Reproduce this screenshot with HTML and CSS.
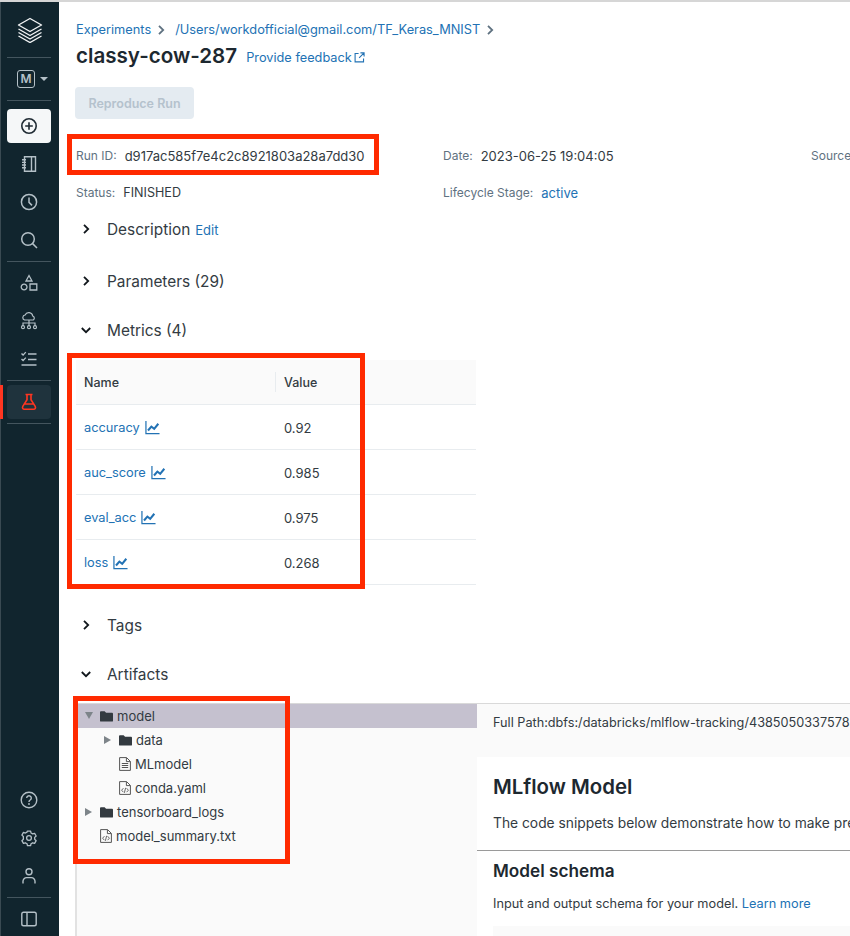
FILE: index.html
```html
<!DOCTYPE html>
<html lang="en">
<head>
<meta charset="utf-8">
<title>classy-cow-287</title>
<link rel="stylesheet" href="styles.css">
</head>
<body>
<svg class="defs" width="0" height="0" aria-hidden="true">
  <symbol id="chart" viewBox="0 0 16 16"><path d="M1 1v13.5h14.5" fill="none" stroke="currentColor" stroke-width="1.3"/><path d="M3.2 11.2l3.6-4.2 3 2.4 4.4-5.4" fill="none" stroke="currentColor" stroke-width="2.2"/></symbol>
  <symbol id="folder" viewBox="0 0 14 12"><path d="M0 2a1 1 0 0 1 1-1h4l1.5 1.5H13a1 1 0 0 1 1 1V11a1 1 0 0 1-1 1H1a1 1 0 0 1-1-1z" fill="#333a40"/></symbol>
  <symbol id="filecode" viewBox="0 0 12 14"><path d="M.6.6h7l3.8 3.8v9H.6zM7.4.8v3.8h3.8" fill="none" stroke="#555" stroke-width="1"/><path d="M4.4 7.2L2.6 9.2l1.8 2M7.6 7.2l1.8 2-1.8 2M6.6 6.8l-1.2 5" fill="none" stroke="#555" stroke-width=".9"/></symbol>
  <symbol id="filetext" viewBox="0 0 12 14"><path d="M.6.6h7l3.8 3.8v9H.6zM7.4.8v3.8h3.8" fill="none" stroke="#555" stroke-width="1"/><path d="M2.8 6.5h6.4M2.8 8.5h6.4M2.8 10.5h6.4" fill="none" stroke="#555" stroke-width="1"/></symbol>
  <symbol id="chev" viewBox="0 0 12 12"><path d="M4 1.8L8.2 6 4 10.2" fill="none" stroke="currentColor" stroke-width="1.8"/></symbol>
  <symbol id="chevd" viewBox="0 0 12 12"><path d="M1.8 4L6 8.2 10.2 4" fill="none" stroke="currentColor" stroke-width="1.8"/></symbol>
</svg>

<div class="app">
  <nav class="sidebar">
    <div class="logo">
      <svg class="ico-logo" viewBox="0 0 26 26"><path d="M13 1.5L24.5 8 13 14.5 1.5 8zM1.5 12l11.5 6.5L24.5 12M1.5 15.5L13 22l11.5-6.5M1.5 19L13 25.5 24.5 19" fill="none" stroke="#f2f4f5" stroke-width="1.4" stroke-linejoin="round"/></svg>
    </div>
    <div class="divider"></div>
    <div class="workspace">
      <span class="ws-badge">M</span><span class="ws-caret"></span>
    </div>
    <div class="divider"></div>
    <div class="group group-first">
      <a class="nav-item nav-active"><svg class="ico" viewBox="0 0 18 18"><circle cx="9" cy="9" r="7.2" fill="none" stroke="#1f2b33" stroke-width="1.6"/><path d="M9 5.2v7.6M5.2 9h7.6" stroke="#1f2b33" stroke-width="1.6"/></svg></a>
      <a class="nav-item"><svg class="ico" viewBox="0 0 18 18"><path d="M4.5 1.8h11v14.4h-11zM11.5 1.8v14.4M2 4.8h4M2 7.4h4M2 10h4M2 12.8h4" fill="none" stroke="currentColor" stroke-width="1.4"/></svg></a>
      <a class="nav-item"><svg class="ico" viewBox="0 0 18 18"><circle cx="9" cy="9" r="7.6" fill="none" stroke="currentColor" stroke-width="1.5"/><path d="M9 4.5V9.4l3 3" fill="none" stroke="currentColor" stroke-width="1.5"/></svg></a>
      <a class="nav-item"><svg class="ico" viewBox="0 0 18 18"><circle cx="8" cy="8" r="6.3" fill="none" stroke="currentColor" stroke-width="1.5"/><path d="M12.6 12.6l4.4 4.4" stroke="currentColor" stroke-width="1.5"/></svg></a>
    </div>
    <div class="divider"></div>
    <div class="group">
      <a class="nav-item"><svg class="ico" viewBox="0 0 18 18"><path d="M9 1.5L12 7H6zM1.2 13a2.9 2.9 0 1 0 5.8 0 2.9 2.9 0 1 0-5.8 0zM10 10h6.8v6H10z" fill="none" stroke="currentColor" stroke-width="1.3"/></svg></a>
      <a class="nav-item"><svg class="ico" viewBox="0 0 18 18"><path d="M4.5 8a2.6 2.6 0 0 1 .6-5 4 4 0 0 1 7.6 1 2.2 2.2 0 0 1 .5 4zM9 8v6M3 14v-3h12v3" fill="none" stroke="currentColor" stroke-width="1.2"/><circle cx="3" cy="15.2" r="1.5" fill="none" stroke="currentColor" stroke-width="1.2"/><circle cx="9" cy="15.2" r="1.5" fill="none" stroke="currentColor" stroke-width="1.2"/><circle cx="15" cy="15.2" r="1.5" fill="none" stroke="currentColor" stroke-width="1.2"/></svg></a>
      <a class="nav-item"><svg class="ico" viewBox="0 0 18 18"><path d="M1.5 3.5l1.6 1.6 2.7-3M1.5 9l1.6 1.6 2.7-3M8 4h8.5M8 9.5h8.5M1.5 15h15" fill="none" stroke="currentColor" stroke-width="1.4"/></svg></a>
    </div>
    <div class="divider"></div>
    <div class="group">
      <a class="nav-item nav-current"><svg class="ico ico-flask" viewBox="0 0 18 18"><path d="M5.5 1.5h7M7 1.5v5.2L2.8 13.4c-.8 1.4 0 2.9 1.6 2.9h9.2c1.6 0 2.4-1.5 1.6-2.9L11 6.7V1.5M4.6 11h8.8" fill="none" stroke="currentColor" stroke-width="1.6"/></svg></a>
    </div>
    <div class="divider"></div>

    <div class="group group-bottom">
      <a class="nav-item"><svg class="ico" viewBox="0 0 18 18"><circle cx="9" cy="9" r="7.8" fill="none" stroke="currentColor" stroke-width="1.4"/><path d="M6.7 7a2.3 2.3 0 1 1 3.5 2c-.8.5-1.2 1-1.2 1.9" fill="none" stroke="currentColor" stroke-width="1.4"/><circle cx="9" cy="13" r=".9" fill="currentColor"/></svg></a>
      <a class="nav-item"><svg class="ico" viewBox="0 0 18 18"><path d="M7.2 1.3h3.6l.5 2.2 1.9 1.1 2.2-.7 1.8 3.1-1.7 1.6v2.2l1.7 1.6-1.8 3.1-2.2-.7-1.9 1.1-.5 2.2H7.2l-.5-2.2-1.9-1.1-2.2.7-1.8-3.1 1.7-1.6V7.6L.8 6l1.8-3.1 2.2.7 1.9-1.1z" transform="translate(1.2 .9) scale(.87)" fill="none" stroke="currentColor" stroke-width="1.5" stroke-linejoin="round"/><circle cx="9" cy="9" r="2.4" fill="none" stroke="currentColor" stroke-width="1.3"/></svg></a>
      <a class="nav-item"><svg class="ico" viewBox="0 0 18 18"><circle cx="9" cy="4.8" r="3" fill="none" stroke="currentColor" stroke-width="1.4"/><path d="M3 16.5v-2.3a3.6 3.6 0 0 1 3.6-3.6h4.8a3.6 3.6 0 0 1 3.6 3.6v2.3" fill="none" stroke="currentColor" stroke-width="1.4"/></svg></a>
    </div>
    <div class="divider"></div>
    <div class="group group-last">
      <a class="nav-item"><svg class="ico" viewBox="0 0 18 18"><rect x="1.8" y="2.2" width="14.4" height="13.6" rx="1.8" fill="none" stroke="currentColor" stroke-width="1.4"/><path d="M7 2.2v13.6" stroke="currentColor" stroke-width="1.4"/></svg></a>
    </div>
  </nav>

  <main class="main">
    <div class="crumbs">
      <a class="link">Experiments</a>
      <svg class="crumb-chev"><use href="#chev"/></svg>
      <a class="link">/Users/workdofficial@gmail.com/TF_Keras_MNIST</a>
      <svg class="crumb-chev"><use href="#chev"/></svg>
    </div>
    <div class="title-row">
      <h1 class="title">classy-cow-287</h1>
      <a class="link feedback">Provide feedback<svg class="ext" viewBox="0 0 12 12"><path d="M5 1.6H1.2v9.2h9.2V7M7 1h4v4M11 1L5.6 6.4" fill="none" stroke="currentColor" stroke-width="1.2"/></svg></a>
    </div>
    <button class="btn" type="button" disabled>Reproduce Run</button>

    <div class="info">
      <div class="info-cell"><span class="lbl">Run ID:</span><span class="val">d917ac585f7e4c2c8921803a28a7dd30</span></div>
      <div class="info-cell"><span class="lbl">Date:</span><span class="val">2023-06-25 19:04:05</span></div>
      <div class="info-cell"><span class="lbl">Source:</span></div>
      <div class="info-cell"><span class="lbl">Status:</span><span class="val val-status">FINISHED</span></div>
      <div class="info-cell"><span class="lbl">Lifecycle Stage:</span><a class="link val-link">active</a></div>
    </div>

    <div class="section sec-desc"><svg class="sec-chev"><use href="#chev"/></svg><span class="sec-name">Description</span><a class="link sec-edit">Edit</a></div>
    <div class="section sec-params"><svg class="sec-chev"><use href="#chev"/></svg><span class="sec-name">Parameters (29)</span></div>
    <div class="section sec-metrics"><svg class="sec-chev"><use href="#chevd"/></svg><span class="sec-name">Metrics (4)</span></div>

    <table class="metrics">
      <thead><tr><th class="c-name">Name</th><th class="c-val">Value</th></tr></thead>
      <tbody>
        <tr><td><a class="link metric">accuracy<svg class="chart"><use href="#chart"/></svg></a></td><td class="num">0.92</td></tr>
        <tr><td><a class="link metric">auc_score<svg class="chart"><use href="#chart"/></svg></a></td><td class="num">0.985</td></tr>
        <tr><td><a class="link metric">eval_acc<svg class="chart"><use href="#chart"/></svg></a></td><td class="num">0.975</td></tr>
        <tr><td><a class="link metric">loss<svg class="chart"><use href="#chart"/></svg></a></td><td class="num">0.268</td></tr>
      </tbody>
    </table>

    <div class="section sec-tags"><svg class="sec-chev"><use href="#chev"/></svg><span class="sec-name">Tags</span></div>
    <div class="section sec-artifacts"><svg class="sec-chev"><use href="#chevd"/></svg><span class="sec-name">Artifacts</span></div>

    <div class="artifacts">
      <div class="tree">
        <div class="node node-selected"><span class="tri tri-down"></span><svg class="ic-folder"><use href="#folder"/></svg><span>model</span></div>
        <div class="node lvl2"><span class="tri"></span><svg class="ic-folder"><use href="#folder"/></svg><span>data</span></div>
        <div class="node lvl2-file"><svg class="ic-file"><use href="#filetext"/></svg><span>MLmodel</span></div>
        <div class="node lvl2-file"><svg class="ic-file"><use href="#filecode"/></svg><span>conda.yaml</span></div>
        <div class="node"><span class="tri"></span><svg class="ic-folder"><use href="#folder"/></svg><span>tensorboard_logs</span></div>
        <div class="node lvl1-file"><svg class="ic-file"><use href="#filecode"/></svg><span>model_summary.txt</span></div>
      </div>
      <div class="viewer">
        <div class="path">Full Path:dbfs:/databricks/mlflow-tracking/4385050337578321/d917ac585f7e4c2c8921803a28a7dd30/artifacts/model</div>
        <div class="model">
          <div class="model-head">
            <h2 class="model-title">MLflow Model</h2>
            <p class="model-text">The code snippets below demonstrate how to make predictions using the logged model.</p>
          </div>
          <div class="schema">
            <h3 class="schema-title">Model schema</h3>
            <p class="schema-text">Input and output schema for your model. <a class="link">Learn more</a></p>
            <div class="schema-box"></div>
          </div>
        </div>
      </div>
    </div>

    <div class="mark mark-id"></div>
    <div class="mark mark-metrics"></div>
    <div class="mark mark-tree"></div>
  </main>
</div>
</body>
</html>
```

FILE: styles.css
```css
* { box-sizing: border-box; }
html, body { margin: 0; height: 100%; overflow: hidden; background: #fff; }
body {
  font-family: Inter, "Liberation Sans", sans-serif;
  font-size: 13px;
  line-height: 20px;
  color: #11171c;
  border-top: 2px solid #d6d6d6;
}
.defs { position: absolute; }
.app { display: flex; height: 934px; }

/* sidebar */
.sidebar {
  flex: 0 0 59px;
  display: flex;
  flex-direction: column;
  padding: 0 7px 0 8px;
  background: #11252e;
  border-left: 1px solid #3a4a52;
  color: #b4c0c7;
  position: relative;
}
.logo { height: 55px; display: flex; align-items: center; justify-content: center; margin-left: -2px; }
.ico-logo { width: 26px; height: 26px; }
.divider { height: 1px; background: #44555e; flex: none; width: 44px; margin-left: -2px; }
.workspace { height: 42px; display: flex; align-items: center; justify-content: center; gap: 5px; padding-left: 4px; }
.ws-badge {
  width: 18px; height: 18px;
  border: 1.5px solid #b4c0c7;
  border-radius: 3px;
  display: flex; align-items: center; justify-content: center;
  font-size: 12px; font-weight: 600; line-height: 1;
}
.ws-caret { width: 0; height: 0; border-left: 4px solid transparent; border-right: 4px solid transparent; border-top: 4px solid #b4c0c7; }
.group { display: flex; flex-direction: column; gap: 4px; margin: 4px 0; }
.group-first { margin-top: 8px; }
.group-bottom { margin-top: auto; }
.group-last { margin-bottom: 0; }
.nav-item { height: 34px; width: 44px; margin-left: -2px; display: flex; align-items: center; justify-content: center; border-radius: 4px; position: relative; }
.ico { width: 18px; height: 18px; }
.nav-active { background: #f5f7f8; }
.nav-current { background: #1f333d; color: #ff3621; }
.nav-current::before { content: ""; position: absolute; left: -7px; top: 0; bottom: 0; width: 3px; background: #ff3621; }

/* main */
.main { flex: 1; min-width: 0; padding: 18px 0 0 17px; overflow: hidden; position: relative; }
.link { color: #2272b4; text-decoration: none; }
.crumbs { display: flex; align-items: center; height: 20px; font-size: 12.8px; white-space: nowrap; }
.crumb-chev { width: 12px; height: 12px; color: #5f7281; margin: 0 8px 0 4px; }
.title-row { display: flex; align-items: center; height: 32px; white-space: nowrap; }
.title { margin: 0; font-size: 20.6px; line-height: 32px; font-weight: 600; color: #1d2830; }
.feedback { display: flex; align-items: center; margin-left: 9px; font-size: 12.75px; padding-top: 3px; }
.ext { width: 11px; height: 11px; margin-left: 2px; }
.btn {
  display: block;
  width: 119px; height: 32px;
  margin: 15px 0 0 -1px; padding: 2px 0 0;
  border: 0; border-radius: 4px;
  background: #e4ebf1; color: #b5c2cd;
  font: 600 12.5px/20px Inter, "Liberation Sans", sans-serif;
}
.info { display: grid; grid-template-columns: 367px 368px 200px; row-gap: 17px; margin-top: 27px; white-space: nowrap; font-size: 12px; }
.info-cell { height: 20px; display: flex; align-items: center; }
.lbl { color: #5f7281; }
.val { margin-left: 8px; color: #333b42; font-size: 13px; }
.val-status { font-size: 12.6px; }
.val-link { margin-left: 8px; font-size: 13px; }

.section { display: flex; align-items: center; height: 24px; white-space: nowrap; }
.sec-desc { margin-top: 14px; }
.sec-params { margin-top: 28px; }
.sec-metrics { margin-top: 25px; }
.sec-tags { margin-top: 28px; }
.sec-artifacts { margin-top: 25px; }
.sec-chev { width: 12px; height: 12px; margin-left: 4px; color: #11171c; flex: none; }
.sec-name { margin-left: 15px; font-size: 15.4px; color: #333b42; padding-top: 2px; }
.sec-edit { margin-left: 5px; font-size: 13px; padding-top: 2px; }

/* metrics table */
.metrics { width: 400px; margin-top: 18px; border-collapse: collapse; table-layout: fixed; }
.metrics th { height: 44px; padding: 2px 8px 0; text-align: left; background: #fafafa; font-weight: 500; font-size: 12.5px; color: #333b42; border-bottom: 1px solid #e8ecef; position: relative; }
.c-name { width: 199px; }
.metrics .c-val { padding-left: 9px; }
.c-val::before { content: ""; position: absolute; left: 0; top: 12px; bottom: 12px; width: 1px; background: #e8ecef; }
.metrics td { height: 45px; padding: 2px 8px 0; border-bottom: 1px solid #e8ecef; font-size: 12.8px; color: #333b42; }
.metrics .num { padding-left: 9px; font-size: 13px; }
.metric { display: inline-flex; align-items: center; }
.chart { width: 15px; height: 15px; margin-left: 5px; }

/* artifacts */
.artifacts { display: grid; grid-template-columns: 402px 1fr; margin: 17px 0 0 -1px; height: 240px; border-top: 1px solid #d9d9d9; }
.tree { background: #fafafa; border-left: 2px solid #e2e2e2; font-size: 13px; color: #333b42; }
.node { height: 24px; display: flex; align-items: center; padding-left: 8px; white-space: nowrap; }
.node-selected { background: #c5c1cf; }
.tri { width: 0; height: 0; flex: none; border-top: 4px solid transparent; border-bottom: 4px solid transparent; border-left: 7px solid #7d8489; margin-right: 8px; }
.tri-down { border-left: 4px solid transparent; border-right: 4px solid transparent; border-top: 7px solid #7d8489; border-bottom: 0; margin-right: 7px; }
.ic-folder { width: 13px; height: 12px; margin-right: 4px; }
.ic-file { width: 12px; height: 14px; margin-right: 4px; flex: none; }
.lvl2 { padding-left: 27px; }
.lvl2-file { padding-left: 42px; }
.lvl1-file { padding-left: 23px; }
.viewer { min-width: 0; background: #fafafa; overflow: hidden; }
.path { height: 53px; padding: 9px 0 0 16px; white-space: nowrap; font-size: 12.7px; color: #333b42; }
.model { background: #fff; white-space: nowrap; }
.model-head { padding: 16px 16px 0; height: 94px; border-bottom: 1px solid #9a9a9a; }
.model-title { margin: 0; font-size: 20.4px; line-height: 28px; font-weight: 600; color: #1d2830; }
.model-text { margin: 12px 0 0; font-size: 13.8px; color: #333b42; }
.schema { padding: 8px 0 0 16px; }
.schema-title { margin: 0; font-size: 17.2px; line-height: 24px; font-weight: 600; color: #1d2830; }
.schema-text { margin: 11px 0 0; font-size: 12.75px; color: #333b42; }
.schema-box { height: 40px; margin-top: 12px; background: #fafafa; }

/* annotation rectangles drawn over the screenshot */
.mark { position: absolute; border: 5px solid #ff2a00; pointer-events: none; }
.mark-id { left: 8px; top: 132px; width: 312px; height: 41px; }
.mark-metrics { left: 8px; top: 351px; width: 298px; height: 236px; }
.mark-tree { left: 14px; top: 694px; width: 217px; height: 168px; }
```
